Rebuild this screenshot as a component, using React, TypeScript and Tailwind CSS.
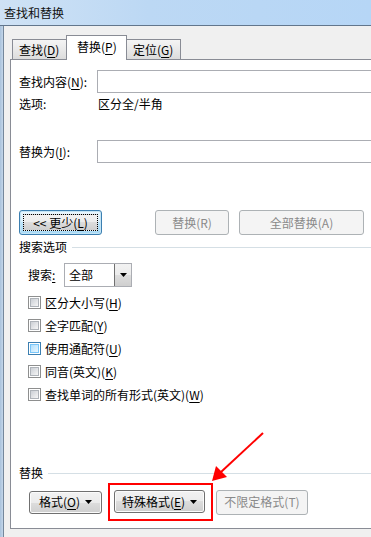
import React from 'react';

// 快捷键字母带下划线
const K = ({ c }: { c: string }) => <span className="underline underline-offset-[2px]">{c}</span>;

const btn =
  'h-[23px] flex items-center justify-center rounded-[3px] border border-[#707070] bg-[linear-gradient(#f2f2f2,#ebebeb_50%,#dddddd_50%,#cfcfcf)] shadow-[inset_0_0_0_1px_#fbfbfb] text-black';
const btnOff =
  'h-[25px] flex items-center justify-center rounded-[3px] border border-[#adb2b5] bg-[#f4f4f4] text-[#8a8a8a]';

function Caret() {
  return (
    <svg width="7" height="4" viewBox="0 0 7 4" className="ml-[5px]">
      <path d="M0 0h7L3.5 4z" fill="#000" />
    </svg>
  );
}

function Check({ label, hover = false }: { label: React.ReactNode; hover?: boolean }) {
  return (
    <div className="h-[23px] flex items-center pl-[9px]">
      <div
        className={`w-[13px] h-[13px] border flex items-center justify-center bg-white ${
          hover ? 'border-[#3c7fb1]' : 'border-[#8e8f8f]'
        }`}
      >
        <div
          className={`w-[9px] h-[9px] border ${
            hover
              ? 'border-[#79c6f9] bg-[linear-gradient(135deg,#b1dffd,#e9f7fe)]'
              : 'border-[#aeb3b9] bg-[linear-gradient(135deg,#cbcfd5,#f6f6f6)]'
          }`}
        />
      </div>
      <span className="ml-[4px]">{label}</span>
    </div>
  );
}

function GroupHead({ text }: { text: string }) {
  return (
    <div className="h-[16px] flex items-center">
      <span>{text}</span>
      <div className="flex-1 h-px bg-[#d5dfe5] ml-[5px]" />
    </div>
  );
}

export default function App() {
  return (
    <div className="w-[371px] h-[537px] relative overflow-hidden flex flex-col bg-[#f0f0f0] text-[12px] leading-[16px] text-black font-['Noto_Sans_CJK_SC','Microsoft_YaHei',sans-serif]">
      {/* 标题栏 */}
      <div className="h-[26px] shrink-0 flex items-center pl-[4px] border-b border-[#62768c] bg-[linear-gradient(90deg,#cfe2f5,#bcd8f4_40%,#b6d6f6)]">
        <span className="text-[#111]">查找和替换</span>
      </div>

      <div className="flex flex-1">
        {/* 窗口左边框 */}
        <div className="w-[3px] bg-[linear-gradient(90deg,#a9c2dc,#c3d6ea)] border-r border-[#74879b] box-content" />

        <div className="flex-1 flex flex-col pl-[6px] pt-[9px]">
          {/* 选项卡 */}
          <div className="flex items-end pl-[2px] -mb-px relative z-10">
            <div className="w-[54px] h-[21px] border border-r-0 border-[#898c95] bg-[linear-gradient(#f4f4f4,#e9e9e9_50%,#dcdcdc)] pl-[6px] flex items-center">
              查找(<K c="D" />)
            </div>
            <div className="w-[61px] h-[25px] border border-b-0 border-[#898c95] bg-white pl-[10px] pb-[2px] flex items-center">
              替换(<K c="P" />)
            </div>
            <div className="w-[54px] h-[21px] border border-l-0 border-[#898c95] bg-[linear-gradient(#f4f4f4,#e9e9e9_50%,#dcdcdc)] pl-[6px] flex items-center">
              定位(<K c="G" />)
            </div>
          </div>

          {/* 面板 */}
          <div className="h-[470px] border-l border-t border-b border-[#898c95] bg-white pl-[8px] flex flex-col">
            <div className="mt-[10px] h-[23px] flex items-center">
              <span className="w-[78px]">
                查找内容(<K c="N" />):
              </span>
              <div className="flex-1 h-[23px] border border-r-0 border-[#abadb3] bg-white" />
            </div>

            <div className="mt-[2px] h-[18px] flex items-center">
              <span className="w-[79px]">选项:</span>
              <span>区分全/半角</span>
            </div>

            <div className="mt-[27px] h-[23px] flex items-center">
              <span className="w-[78px]">
                替换为(<K c="I" />):
              </span>
              <div className="flex-1 h-[23px] border border-r-0 border-[#abadb3] bg-white" />
            </div>

            <div className="mt-[47px] h-[25px] flex items-center">
              <div className="w-[83px] h-[25px] rounded-[3px] border border-[#3c7fb1] bg-[linear-gradient(#eaf6fd,#d9f0fc_50%,#bee6fd_50%,#a7d9f5)] shadow-[inset_0_0_0_1px_#c4e5f6] p-[3px]">
                <div className="w-full h-full border border-dotted border-black bg-[linear-gradient(#f2f2f2,#ebebeb_50%,#dddddd_50%,#cfcfcf)] flex items-center justify-center">
                  &lt;&lt; 更少(<K c="L" />)
                </div>
              </div>
              <div className={`${btnOff} w-[74px] ml-[53px]`}>替换(R)</div>
              <div className={`${btnOff} w-[125px] ml-[10px]`}>全部替换(A)</div>
            </div>

            <div className="mt-[4px]">
              <GroupHead text="搜索选项" />
            </div>

            <div className="mt-[8px] h-[24px] flex items-center pl-[9px]">
              <span className="w-[36px]">
                搜索<K c=":" />
              </span>
              <div className="w-[68px] h-[24px] border border-[#abadb3] bg-white flex">
                <span className="flex-1 pl-[4px] flex items-center">全部</span>
                <div className="w-[17px] h-full border-l border-[#707070] bg-[linear-gradient(#f2f2f2,#ebebeb_50%,#dddddd_50%,#cfcfcf)] flex items-center justify-center">
                  <svg width="7" height="4" viewBox="0 0 7 4">
                    <path d="M0 0h7L3.5 4z" fill="#000" />
                  </svg>
                </div>
              </div>
            </div>

            <div className="mt-[4px] flex flex-col">
              <Check label={<>区分大小写(<K c="H" />)</>} />
              <Check label={<>全字匹配(<K c="Y" />)</>} />
              <Check label={<>使用通配符(<K c="U" />)</>} hover />
              <Check label={<>同音(英文)(<K c="K" />)</>} />
              <Check label={<>查找单词的所有形式(英文)(<K c="W" />)</>} />
            </div>

            <div className="mt-[59px]">
              <GroupHead text="替换" />
            </div>

            <div className="mt-[2px] flex items-center pl-[10px]">
              <div className={`${btn} w-[73px]`}>
                格式(<K c="O" />)
                <Caret />
              </div>
              <div className="ml-[6px] border-2 border-[#ff0000] pl-[4px] pr-[6px] pt-[5px] pb-[6px]">
                <div className={`${btn} w-[91px]`}>
                  特殊格式(<K c="E" />)
                  <Caret />
                </div>
              </div>
              <div className={`${btnOff} w-[92px] ml-[3px] h-[24px]`}>不限定格式(T)</div>
            </div>
          </div>
        </div>
      </div>

      {/* 红色箭头标注 */}
      <svg className="absolute left-0 top-0 pointer-events-none" width="371" height="537">
        <line x1="263" y1="433" x2="221" y2="472" stroke="#ff0000" strokeWidth="2" />
        <path d="M212 481 L216 466 L227 477 Z" fill="#ff0000" />
      </svg>
    </div>
  );
}
